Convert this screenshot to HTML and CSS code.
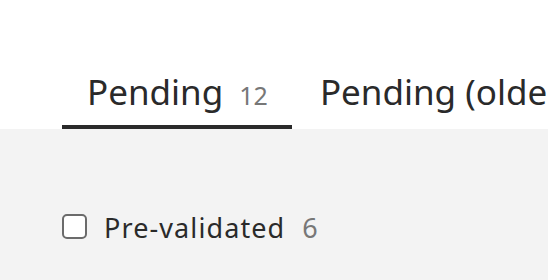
FILE: index.html
```html
<!DOCTYPE html>
<html>
<head>
<meta charset="utf-8">
<link rel="stylesheet" href="styles.css">
</head>
<body>
<div class="top">
  <nav class="tabs">
    <div class="tab active"><span class="label">Pending</span><span class="count">12</span></div>
    <div class="tab"><span class="label">Pending (older than 30 days)</span><span class="count">4</span></div>
  </nav>
</div>
<main class="content">
  <label class="filter">
    <span class="box"></span>
    <span class="flabel">Pre-validated</span>
    <span class="fcount">6</span>
  </label>
</main>
</body>
</html>
```
FILE: styles.css
```css
html, body {
  margin: 0;
  padding: 0;
  overflow: hidden;
  width: 548px;
  height: 280px;
  font-family: "Noto Sans", sans-serif;
  color: #2a2a2a;
}
.top {
  height: 129px;
  background: #fff;
  display: flex;
  align-items: flex-end;
}
.tabs {
  display: flex;
  padding-left: 62px;
  gap: 3px;
  white-space: nowrap;
}
.tab {
  display: flex;
  align-items: baseline;
  padding: 0 24px 13px 25px;
  border-bottom: 4px solid transparent;
}
.tab.active {
  border-bottom-color: #2a2a2a;
}
.label {
  font-size: 35px;
  line-height: 40px;
}
.count {
  font-size: 25px;
  color: #777;
  margin-left: 16px;
}
.content {
  background: #f3f3f3;
  height: 151px;
  padding: 80px 0 0 62px;
  box-sizing: border-box;
}
.filter {
  display: flex;
  align-items: center;
}
.box {
  width: 21px;
  height: 21px;
  border: 2px solid #6b6b6b;
  border-radius: 5px;
  background: #fff;
  margin-top: -3px;
}
.flabel {
  font-size: 27px;
  letter-spacing: 1.1px;
  margin-left: 17px;
}
.fcount {
  font-size: 27px;
  color: #777;
  margin-left: 17px;
}
```
